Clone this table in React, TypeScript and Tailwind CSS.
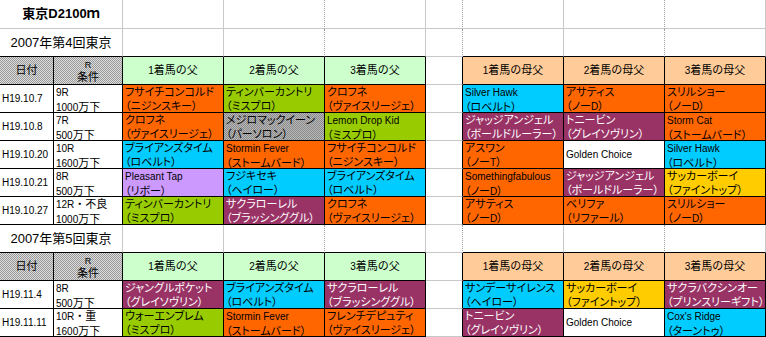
const FONT = "font-['Liberation_Sans','Noto_Sans_CJK_JP',sans-serif]";

const GRID = "border-[#c8c8c8]";

type Cell = [string, string, string];

type Row = {
  date: string;
  race: [string, string];
  sires: Cell[];
  dams: Cell[];
};

const sections: { label: string; rows: Row[] }[] = [
  {
    label: "2007年第4回東京",
    rows: [
      {
        date: "H19.10.7",
        race: ["9R", "1000万下"],
        sires: [
          ["フサイチコンコルド", "（ニジンスキー）", "o"],
          ["ティンバーカントリ", "（ミスプロ）", "g"],
          ["クロフネ", "（ヴァイスリージェ）", "o"],
        ],
        dams: [
          ["Silver Hawk", "（ロベルト）", "c"],
          ["アサティス", "（ノーD）", "o"],
          ["スリルショー", "（ノーD）", "o"],
        ],
      },
      {
        date: "H19.10.8",
        race: ["7R", "500万下"],
        sires: [
          ["クロフネ", "（ヴァイスリージェ）", "o"],
          ["メジロマックイーン", "（パーソロン）", "x"],
          ["Lemon Drop Kid", "（ミスプロ）", "g"],
        ],
        dams: [
          ["ジャッジアンジェル", "（ボールドルーラー）", "p"],
          ["トニービン", "（グレイソヴリン）", "p"],
          ["Storm Cat", "（ストームバード）", "o"],
        ],
      },
      {
        date: "H19.10.20",
        race: ["10R", "1600万下"],
        sires: [
          ["ブライアンズタイム", "（ロベルト）", "c"],
          ["Stormin Fever", "（ストームバード）", "o"],
          ["フサイチコンコルド", "（ニジンスキー）", "o"],
        ],
        dams: [
          ["アスワン", "（ノーT）", "o"],
          ["Golden Choice", "", "w"],
          ["Silver Hawk", "（ロベルト）", "c"],
        ],
      },
      {
        date: "H19.10.21",
        race: ["8R", "500万下"],
        sires: [
          ["Pleasant Tap", "（リボー）", "l"],
          ["フジキセキ", "（ヘイロー）", "c"],
          ["ブライアンズタイム", "（ロベルト）", "c"],
        ],
        dams: [
          ["Somethingfabulous", "（ノーD）", "o"],
          ["ジャッジアンジェル", "（ボールドルーラー）", "p"],
          ["サッカーボーイ", "（ファイントップ）", "y"],
        ],
      },
      {
        date: "H19.10.27",
        race: ["12R・不良", "1000万下"],
        sires: [
          ["ティンバーカントリ", "（ミスプロ）", "g"],
          ["サクラローレル", "（ブラッシンググル）", "p"],
          ["クロフネ", "（ヴァイスリージェ）", "o"],
        ],
        dams: [
          ["アサティス", "（ノーD）", "o"],
          ["ベリファ", "（リファール）", "o"],
          ["スリルショー", "（ノーD）", "o"],
        ],
      },
    ],
  },
  {
    label: "2007年第5回東京",
    rows: [
      {
        date: "H19.11.4",
        race: ["8R", "500万下"],
        sires: [
          ["ジャングルポケット", "（グレイソヴリン）", "p"],
          ["ブライアンズタイム", "（ロベルト）", "c"],
          ["サクラローレル", "（ブラッシンググル）", "p"],
        ],
        dams: [
          ["サンデーサイレンス", "（ヘイロー）", "c"],
          ["サッカーボーイ", "（ファイントップ）", "y"],
          ["サクラバクシンオー", "（プリンスリーギフト）", "p"],
        ],
      },
      {
        date: "H19.11.11",
        race: ["10R・重", "1600万下"],
        sires: [
          ["ウォーエンブレム", "（ミスプロ）", "g"],
          ["Stormin Fever", "（ストームバード）", "o"],
          ["フレンチデピュティ", "（ヴァイスリージェ）", "o"],
        ],
        dams: [
          ["トニービン", "（グレイソヴリン）", "p"],
          ["Golden Choice", "", "w"],
          ["Cox's Ridge", "（ターントゥ）", "c"],
        ],
      },
    ],
  },
];

const fills: Record<string, string> = {
  o: "bg-[#ff6600] text-black",
  g: "bg-[#99cc00] text-black",
  c: "bg-[#00ccff] text-black",
  p: "bg-[#993366] text-white",
  l: "bg-[#cc99ff] text-black",
  y: "bg-[#ffcc00] text-black",
  w: "bg-white text-black",
  x: "bg-[image:repeating-conic-gradient(#8a8a8a_0_25%,#b8b8b8_0_50%)] bg-[length:2px_2px] text-black",
};

const headPattern =
  "bg-[image:repeating-conic-gradient(#9a9a9a_0_25%,#dcdcdc_0_50%)] bg-[length:2px_2px]";

// ascii runs are drawn a bit smaller, like the bitmap gothic in the sheet
const Txt = ({ s }: { s: string }) => (
  <>
    {s.split(/([A-Za-z0-9'.\s]+)/).map((p, i) =>
      /^[A-Za-z0-9'.\s]+$/.test(p) ? (
        <span key={i} className="text-[10px]">
          {p}
        </span>
      ) : (
        p
      )
    )}
  </>
);

const BlankRow = ({
  label,
  bold,
  first,
  beforeTable,
}: {
  label: string;
  bold?: boolean;
  first?: boolean;
  beforeTable?: boolean;
}) => {
  const h = first ? "h-[29px]" : "h-[28px]";
  const bb = beforeTable ? "border-b-black" : "";
  return (
    <div className={`flex ${h}`}>
      <div
        className={`w-[123px] border-r border-b ${GRID} ${bb} flex items-center justify-center text-black text-[13px] ${
          bold ? "font-bold" : ""
        }`}
      >
        {label}
      </div>
      <div className={`w-[101px] border-r border-b ${GRID} ${bb}`} />
      <div className={`w-[101px] border-r border-b ${GRID} ${bb} [border-right-style:dotted] border-r-[#a0a0a0]`} />
      <div className={`w-[101px] border-r border-b ${GRID} ${bb}`} />
      <div className={`w-[37px] border-r border-b ${GRID} [border-right-style:dotted] border-r-[#a0a0a0]`} />
      <div className={`w-[101px] border-r border-b ${GRID} ${bb}`} />
      <div className={`w-[101px] border-r border-b ${GRID} ${bb} [border-right-style:dotted] border-r-[#a0a0a0]`} />
      <div className={`w-[101px] border-r border-b ${GRID} ${bb}`} />
    </div>
  );
};

const HeaderRow = () => (
  <div className="flex h-[28px] text-[11px] text-black">
    <div className={`w-[54px] border-r border-b border-black ${headPattern} flex items-center justify-center`}>
      日付
    </div>
    <div
      className={`w-[69px] border-r border-b border-black ${headPattern} flex flex-col items-center pt-[2px] leading-[12px]`}
    >
      <span className="text-[9px]">R</span>
      <span>条件</span>
    </div>
    {["1着馬の父", "2着馬の父", "3着馬の父"].map((t) => (
      <div
        key={t}
        className="w-[101px] border-r border-b border-black bg-[#ccffcc] flex items-center justify-center"
      >
        <Txt s={t} />
      </div>
    ))}
    <div className={`w-[37px] border-r border-b ${GRID} border-r-black`} />
    {["1着馬の母父", "2着馬の母父", "3着馬の母父"].map((t) => (
      <div
        key={t}
        className="w-[101px] border-r border-b border-black bg-[#ffcc99] flex items-center justify-center"
      >
        <Txt s={t} />
      </div>
    ))}
  </div>
);

const Horse = ({ cell }: { cell: Cell }) => {
  const [name, line, fill] = cell;
  return (
    <div
      className={`w-[101px] border-r border-b border-black ${fills[fill]} pl-[2px] overflow-hidden whitespace-nowrap text-[11px] leading-[14px] [font-feature-settings:'palt'] flex flex-col ${
        line ? "" : "justify-center"
      }`}
    >
      <span>
        <Txt s={name} />
      </span>
      {line && (
        <span>
          <Txt s={line} />
        </span>
      )}
    </div>
  );
};

const DataRow = ({ row }: { row: Row }) => (
  <div className="flex h-[28px] text-[11px] text-black">
    <div className="w-[54px] border-r border-b border-black bg-white flex items-center pl-[2px]">
      <Txt s={row.date} />
    </div>
    <div className="w-[69px] border-r border-b border-black bg-white pl-[2px] flex flex-col leading-[14px] whitespace-nowrap overflow-hidden">
      <span>
        <Txt s={row.race[0]} />
      </span>
      <span>
        <Txt s={row.race[1]} />
      </span>
    </div>
    {row.sires.map((c, i) => (
      <Horse key={i} cell={c} />
    ))}
    <div className={`w-[37px] border-r border-b ${GRID} border-r-black`} />
    {row.dams.map((c, i) => (
      <Horse key={i} cell={c} />
    ))}
  </div>
);

export default function App() {
  return (
    <div className={`w-[766px] h-[337px] bg-white overflow-hidden ${FONT}`}>
      <BlankRow label="東京D2100ｍ" bold first />
      {sections.map((s) => (
        <div key={s.label}>
          <BlankRow label={s.label} beforeTable />
          <HeaderRow />
          {s.rows.map((r) => (
            <DataRow key={r.date} row={r} />
          ))}
        </div>
      ))}
    </div>
  );
}
